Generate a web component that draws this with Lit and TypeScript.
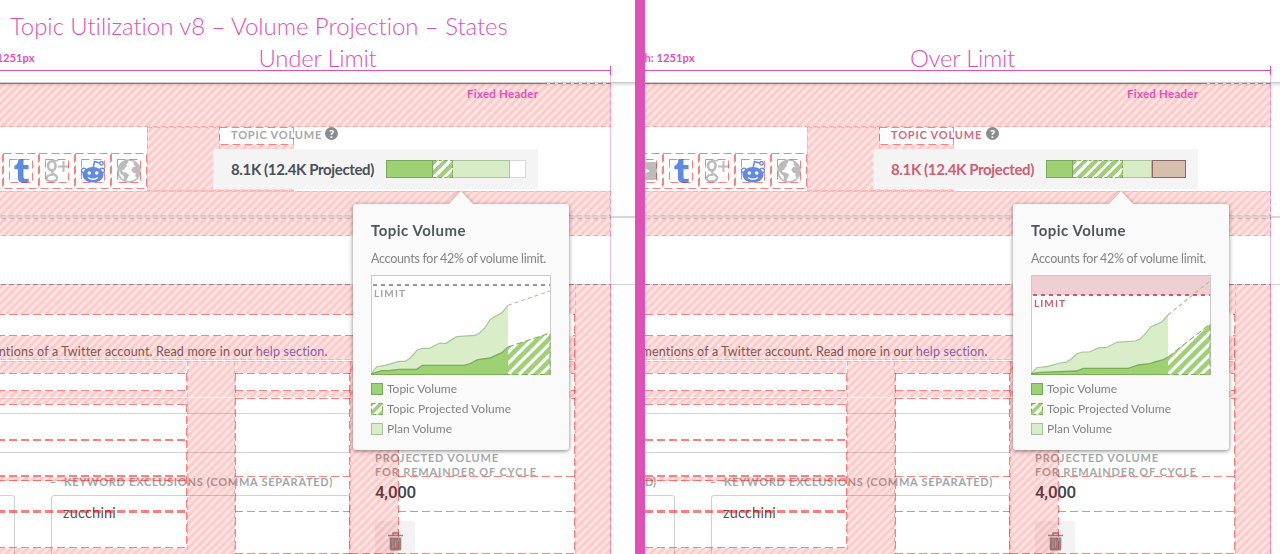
import { LitElement, html, svg, css } from "lit";
import { customElement, property } from "lit/decorators.js";

type State = "under" | "over";

/** One line of text tracked so that it fills a given width. */
@customElement("fit-text")
class FitText extends LitElement {
  @property({ type: Number }) w = 0;
  @property() text = "";
  static styles = css`
    :host { display: block; white-space: pre; }
    span { display: inline-block; }
  `;
  render() {
    return html`<span>${this.text}</span>`;
  }
  updated() {
    const s = this.renderRoot.querySelector("span") as HTMLElement;
    s.style.letterSpacing = "0px";
    const natural = s.getBoundingClientRect().width;
    s.style.letterSpacing = `${((this.w - natural) / this.text.length).toFixed(3)}px`;
  }
}

const ft = (text: string, w: number, cls = "") =>
  html`<fit-text class=${cls} .w=${w} .text=${text}></fit-text>`;

const youtube = html`<svg width="24" height="24" viewBox="0 0 24 24"><rect y="3" width="24" height="18" rx="3" fill="#bcbcbc"/><path d="M9 8l8 4-8 4z" fill="#fff"/></svg>`;
const tumblr = html`<svg width="24" height="24" viewBox="0 0 24 24"><path d="M9.500 0h5v6h5v4.300h-5v7.200c0 2 .8 2.600 2.300 2.600 1 0 2-.2 2.900-.6v3.400c-1.300.8-3 1.100-5 1.100-4 0-5.800-2-5.800-5.500V10.300H5.400V6.800C7.900 6 9.300 3.600 9.500 0z" fill="#6089e2"/></svg>`;
const gplus = html`<svg width="24" height="24" viewBox="0 0 24 24" fill="none" stroke="#bcbcbc"><ellipse cx="6.800" cy="6.800" rx="3.800" ry="4.600" stroke-width="2.600"/><path d="M8 1.600h5.500" stroke-width="1.600"/><path d="M8.500 11.500c-2.500 1.600-1.600 2.600.3 3.700 2.500 1.400 3.800 2.500 3.300 4.300-.8 2.700-4.400 3.100-6.800 2.800-3-.4-4.200-2.200-3.300-4.200.8-1.700 3.300-2.400 6-2.500" stroke-width="2.200"/><path d="M18.500 2v11M13 7.500h11" stroke-width="2"/></svg>`;
const reddit = html`<svg width="24" height="24" viewBox="0 0 24 24"><path d="M12 9.500l1.500-7 6 1.800" fill="none" stroke="#6089e2" stroke-width="1.500"/><circle cx="20.500" cy="4.300" r="1.800" fill="#fff" stroke="#6089e2" stroke-width="1.300"/><circle cx="2.800" cy="11.500" r="2.300" fill="#fff" stroke="#6089e2" stroke-width="1.300"/><circle cx="21.200" cy="11.500" r="2.300" fill="#fff" stroke="#6089e2" stroke-width="1.300"/><ellipse cx="12" cy="15.800" rx="10.500" ry="7.700" fill="#6089e2"/><circle cx="8.300" cy="14" r="1.800" fill="#fff"/><circle cx="15.700" cy="14" r="1.800" fill="#fff"/><path d="M7 18.500q5 3.600 10 0" fill="none" stroke="#fff" stroke-width="1.400"/></svg>`;
const globe = html`<svg width="24" height="24" viewBox="0 0 24 24"><circle cx="12" cy="12" r="11" fill="#fff" stroke="#bcbcbc" stroke-width="1.600"/><path d="M3 5.500L7 2.200l4-.9.5 1.900-2.300 2.200 1 1.500-2.200 1.800-.8 2.400-2-.3.300 2.200 3.200.4 3.600 2.400-1.600 3-2 3.900-1.600-1.600-.5-4-2.700-2.300-2.500-4L1.300 9z" fill="#bcbcbc"/><path d="M17 2.500l3.200 2.500 2.800 6-.6 4-2.600 3.700-1.500-1.500.3-3.200-2.600-.3-1.700-3 1.700-2.700 2.700-.5-2.300-2z" fill="#bcbcbc"/></svg>`;
const trash = html`<svg width="15" height="19" viewBox="0 0 15 19"><path d="M0 3.500h15M5 3V1h5v2" fill="none" stroke="#8a8a8a" stroke-width="1.500"/><path d="M1.700 5.500h11.600V17a1.500 1.500 0 0 1-1.500 1.500H3.200A1.500 1.500 0 0 1 1.700 17z" fill="#8a8a8a"/><path d="M5 7.500v8.500M7.500 7.500v8.500M10 7.500v8.500" stroke="#aaa"/></svg>`;

/** Spacing overlay: hatched gutters and dashed guides. */
@customElement("redline-overlay")
class RedlineOverlay extends LitElement {
  static styles = css`
    :host { display: block; }
    svg { display: block; }
    .g { stroke: #ff0000; stroke-opacity: 0.5; stroke-dasharray: 8 4; fill: none; }
    .s { stroke: #ff0000; stroke-opacity: 0.2; stroke-dasharray: 5 3; fill: none; }
    .k { stroke: #8a1c2c; stroke-opacity: 0.5; stroke-dasharray: 5 3; fill: none; }
    .m { stroke: #de52b8; fill: none; }
    .n { font: 700 11.5px Lato, "Open Sans", sans-serif; fill: #de52b8; }
    .wh { fill: #fff; }
  `;
  h(y: number, a: number, b: number, c = "g") {
    return svg`<path class=${c} d="M${a} ${y + 0.5}H${b}"/>`;
  }
  v(x: number, a: number, b: number, c = "g") {
    return svg`<path class=${c} d="M${x + 0.5} ${a}V${b}"/>`;
  }
  hatch(x: number, y: number, w: number, h: number) {
    return svg`<rect x=${x} y=${y} width=${w} height=${h} fill="url(#hatch)"/>`;
  }
  render() {
    const L = -15;
    return html`<svg width="650" height="554" viewBox="-15 0 650 554">
      <defs>
        <pattern id="hatch" width="8" height="8" patternUnits="userSpaceOnUse">
          <rect width="8" height="8" fill="#f00" fill-opacity=".105"/>
          <path d="M-2 2l4-4M-2 10L10-2M6 10l4-4" stroke="#f00" stroke-opacity=".115" stroke-width="2.700"/>
        </pattern>
      </defs>
      ${this.hatch(L, 84, 625, 43)}${this.h(126, L, 611, "s")}
      ${this.hatch(147, 127, 72, 64)}${this.h(127, 147, 219, "s")}${this.h(190, 147, 219, "s")}
      ${this.v(147, 127, 191, "s")}${this.v(219, 127, 191, "s")}
      ${this.hatch(219, 145, 75, 46)}${this.h(190, 219, 294, "s")}
      <path class="g" d="M219.500 127.500H293.500V144.500H219.500z"/>
      ${[-33, 3, 39, 75, 111].map((x) => svg`
        <path class="g" d="M${x + 0.5} 153.500H${x + 35.5}V188.500H${x + 0.5}z"/>
        <path class="g" d="M${x + 6.5} 159.500H${x + 29.5}V182.500H${x + 6.5}z"/>`)}
      ${this.hatch(L, 191, 625, 25)}${this.h(191, L, 611, "s")}${this.h(215, L, 611, "s")}
      ${this.hatch(L, 218, 625, 18)}${this.h(218, L, 611, "s")}${this.h(235, L, 611, "s")}
      ${this.hatch(L, 285, 590, 29)}${this.h(284, L, 611, "k")}${this.h(314, L, 575)}
      ${this.h(335, L, 575)}${this.hatch(L, 336, 590, 24)}${this.h(359, L, 575, "s")}
      ${this.hatch(L, 361, 201, 12)}${this.hatch(236, 361, 339, 12)}${this.h(361, L, 575, "s")}
      ${this.h(373, L, 187)}${this.h(373, 235, 575)}
      ${this.h(390, L, 187)}${this.h(390, 235, 575)}
      ${this.hatch(L, 391, 202, 6)}${this.hatch(235, 391, 340, 6)}
      ${this.hatch(L, 398, 202, 6)}${this.h(398, L, 187, "s")}${this.h(404, L, 187)}${this.h(398, 235, 575)}
      ${this.h(439, L, 187)}${this.h(440, L, 187)}
      ${this.h(475, L, 187)}${this.h(476, L, 187)}${this.hatch(L, 477, 202, 4)}${this.h(480, L, 187)}
      ${this.h(510, L, 187)}${this.h(511, L, 187)}${this.h(512, L, 187)}
      ${this.h(547, L, 187)}${this.hatch(L, 548, 202, 6)}
      ${this.h(476, 235, 350)}${this.h(511, 235, 350)}${this.h(553, 235, 350)}
      ${this.h(476, 398, 575)}${this.h(511, 398, 575)}${this.h(553, 350, 575)}
      ${this.hatch(187, 361, 48, 193)}${this.hatch(350, 361, 48, 193)}
      ${this.v(186, 373, 390)}${this.v(186, 404, 548)}${this.v(187, 361, 554, "s")}
      ${this.v(235, 373, 554)}${this.v(234, 361, 554, "s")}
      ${this.v(349, 373, 554)}${this.v(350, 361, 554, "s")}${this.v(398, 373, 554)}
      ${this.hatch(575, 285, 36, 269)}${this.v(574, 314, 554)}${this.v(575, 284, 554, "s")}
      <rect class="wh" x="-15" y="397" width="590" height="1" fill-opacity=".8"/>
      <path class="m" d="M-15 70.500H610.500M610.500 66V75"/>
      <path class="m" d="M610.500 75V554" stroke-opacity=".38"/>
      <path d="M-15 83.500H542" stroke="#b05a90"/>
      <path d="M542 83.500H611" stroke="#a8707a" stroke-dasharray="5 3"/>
      <path class="s" d="M610.500 84V127M610.500 191V236M610.500 285V554"/>
      <text class="n" x="-15.500" y="61.500" font-size="11" textLength="50" lengthAdjust="spacingAndGlyphs">h: 1251px</text>
      <text class="n" x="467" y="98" textLength="71">Fixed Header</text>
    </svg>`;
  }
}

const planUnder = "0 99,5.700 91.700,14 90.300,28.300 86.300,34.300 86.300,39.700 82.700,46.300 75,51.700 73.300,58.300 73.300,68.300 68.300,75 68.300,85.700 61.700,104 60.300,108.300 58.300,114 52.700,119.700 44,130.700 38,137 30.300";
const topicUnder = "0 99,10.700 95.700,19 95.300,28.300 94.300,45.700 94.300,51.300 90.300,93 90.300,98.300 89,106.700 84.700,119 83,126.300 79.700,131 77.700,137 72";
const planOver = "0 99,5.700 92.700,17.300 91.300,29 88,35 87.300,40.300 84,46 78.700,51.700 77,58.300 77,68.300 72.700,75 72.700,85.700 67.300,104 66,109 64,114.700 58.300,120 51.700,130.700 47,137 40";
const topicOver = "0 99,9 97.300,45.700 96,52.300 93.300,97.300 93.300,107.300 90,119 88.700,125.700 86.300,131.700 85,137 82";

@customElement("volume-popover")
class VolumePopover extends LitElement {
  @property() state: State = "under";
  static styles = css`
    :host { display: block; box-sizing: border-box; width: 216px; height: 246px; padding: 15px 18px 0; background: #fafafa; border-radius: 3px; filter: drop-shadow(0 1px 2px rgba(0,0,0,.5)); font: 12px/20px Lato, "Open Sans", sans-serif; color: #7f8183; }
    .tip { position: absolute; left: 95px; top: -13px; width: 26px; height: 14px; background: #fafafa; clip-path: polygon(50% 0, 100% 100%, 0 100%); }
    .title { font-size: 15px; line-height: 23px; font-weight: 700; color: #51555c; }
    .sub { font-size: 12.5px; line-height: 20px; margin: 7px 0 6px; color: #858585; }
    svg { display: block; }
    .item { display: flex; align-items: center; gap: 4px; height: 20px; }
    .legend { padding-top: 4px; }
    .lim { font: 700 10px Lato, "Open Sans", sans-serif; }
  `;
  render() {
    const over = this.state === "over";
    const plan = over ? planOver : planUnder;
    const topic = over ? topicOver : topicUnder;
    const limY = over ? 20 : 10;
    const limC = over ? "#cc5c70" : "#999";
    const pE = over ? "179 6" : "179 16";
    const tE = over ? "179 49" : "179 58";
    const t0 = over ? "137 82" : "137 72";
    const p0 = over ? "137 40" : "137 30.300";
    return html`<div class="tip"></div>
      ${ft("Topic Volume", 95, "title")}
      ${ft("Accounts for 42% of volume limit.", 175, "sub")}
      <svg width="180" height="100" viewBox="0 0 180 100">
        <defs><pattern id="ph" width="11" height="11" patternUnits="userSpaceOnUse"><rect width="11" height="11" fill="#fff"/><path d="M-3 3l6-6M-3 14L14-3M8 14l6-6" stroke="#9ed174" stroke-width="4.500"/></pattern></defs>
        <rect width="180" height="100" fill="#fff"/>
        ${over ? svg`<rect width="180" height="20" fill="#f0cfd4"/>` : ""}
        <rect x=".5" y=".5" width="179" height="99" fill="none" stroke="#cacaca"/>
        <polygon points="${plan} 137 99,0 99" fill="#d9edc9"/>
        <polyline points=${plan} fill="none" stroke="#a9c59a" stroke-width="1.200"/>
        <polygon points="${topic} 137 99,0 99" fill="#9ed174"/>
        <polyline points=${topic} fill="none" stroke="#7bad58" stroke-width="1.300"/>
        <path d="M0 99.500H137" stroke="#7bad58"/>
        <path d="M${t0}L${tE}V100H137z" fill="url(#ph)"/>
        <path d="M${t0}L${tE}V99.500H137" fill="none" stroke="#7bad58" stroke-dasharray="6 3"/>
        <path d="M${p0}L${pE}" stroke="#b8b8a0" stroke-width="1.200" stroke-dasharray="4 3"/>
        <path d="M2 ${limY}H179" stroke=${limC} stroke-width="2" stroke-dasharray="4 4"/>
        <text class="lim" x="3" y=${limY + 12} fill=${over ? limC : "#a3a3a3"} textLength="31">LIMIT</text>
      </svg>
      <div class="legend">
        <div class="item"><svg width="12" height="12"><rect x=".5" y=".5" width="11" height="11" fill="#9ed174" stroke="#78a85a"/></svg>${ft("Topic Volume", 70)}</div>
        <div class="item"><svg width="12" height="12"><rect width="12" height="12" fill="#fff"/><path d="M0 12V8L8 0h4v1L1 12zM6 12l6-6v5l-1 1zM0 0h4L0 4z" fill="#9ed174"/><rect x=".5" y=".5" width="11" height="11" fill="none" stroke="#78a85a" stroke-dasharray="4 3"/></svg>${ft("Topic Projected Volume", 124)}</div>
        <div class="item"><svg width="12" height="12"><rect x=".5" y=".5" width="11" height="11" fill="#d9edc9" stroke="#a8c39a"/></svg>${ft("Plan Volume", 65)}</div>
      </div>`;
  }
}

@customElement("volume-bar")
class VolumeBar extends LitElement {
  @property() state: State = "under";
  static styles = css`
    :host { display: flex; width: 140px; height: 18px; }
    i { display: block; box-sizing: border-box; height: 18px; border: 1px solid; }
    .topic { background: #9ed174; border-color: #78a85a; }
    .proj { border: 1px dashed #78a85a; border-left: 0; background: repeating-linear-gradient(135deg, #9ed174 0 4px, #fff 4px 7.200px) border-box; }
    .plan { background: #d8ecc8; border-color: #a8c39a; border-left: 0; }
    .rest { background: #fff; border-color: #d8d8d8; border-left: 0; }
    .excess { background: #d6bfad; border-color: #8d6763; }
  `;
  render() {
    const parts: [string, number][] = this.state === "over"
      ? [["topic", 27], ["proj", 50], ["plan", 29], ["excess", 34]]
      : [["topic", 47], ["proj", 20], ["plan", 57], ["rest", 16]];
    return html`${parts.map(([c, w]) => html`<i class=${c} style="width:${w}px"></i>`)}`;
  }
}

@customElement("art-board")
class ArtBoard extends LitElement {
  @property() state: State = "under";
  static styles = css`
    :host { display: grid; grid-template: 554px / 635px; width: 635px; height: 554px; overflow: hidden; background: #fff; font-family: Lato, "Open Sans", sans-serif; }
    .names, .page, redline-overlay, .widget { grid-area: 1 / 1; }
    .names { padding-top: 10px; font-size: 24px; font-weight: 300; line-height: 32px; color: #de52b8; z-index: 2; }
    .name { height: 32px; padding-left: 10px; }
    .state { width: max-content; margin: 0 auto; }
    .page, redline-overlay, .widget { width: 650px; height: 554px; }
    .page { display: grid; grid-template-rows: 82px 45px 64px 25px 68px 52px 25px 193px; }
    .shade { grid-row: 2; height: 5px; background: linear-gradient(#c4c4c4, #e6e6e6 40%, #fff); }
    .top { grid-row: 3; display: flex; align-items: flex-start; }
    .icons { display: flex; margin: 26px 0 0 -18px; width: 264px; flex: none; }
    .icons span { width: 36px; height: 36px; display: grid; place-items: center; }
    .head { display: flex; gap: 3px; font-size: 11px; line-height: 16px; font-weight: 700; color: #a6a6a6; }
    .over .head { color: #d26a7d; gap: 4px; }
    .q { width: 13px; height: 13px; border-radius: 50%; background: #8c8c8c; color: #fff; font: 900 11px/13px Lato, sans-serif; text-align: center; }
    .rule { grid-row: 5; height: 2px; background: #d6d6d6; }
    .body { grid-row: 6; border-top: 1px solid #d4d4d4; }
    .help { grid-row: 7; display: flex; justify-content: flex-end; width: 342.500px; font-size: 12.500px; line-height: 20px; margin-top: 6px; color: #666; white-space: pre; }
    .help a { color: #6872cc; }
    .form { grid-row: 8; display: grid; grid-template-columns: 365px 1fr; }
    .left { display: grid; grid-template-rows: 53px 39px 20px 1fr; }
    .left hr { margin: 0; border: 0; border-top: 1px solid #d4d4d4; align-self: start; }
    .left hr:first-child { align-self: end; }
    .left hr:nth-child(2) { margin-top: 38px; }
    .legends { display: flex; justify-content: space-between; width: 348px; font-size: 11px; line-height: 16px; font-weight: 700; color: #a0a5a5; margin-top: 21px; }
    .fields { display: grid; grid-template-columns: 30px 299px; gap: 36px; margin-top: 22px; height: 80px; }
    .f { border: 1px solid #d0d0d0; border-radius: 3px; font-size: 14.500px; color: #555; line-height: 20px; padding: 7px 11px; }
    .f:first-child { border-left: 0; border-radius: 0 3px 3px 0; padding: 0; }
    .right { padding: 90px 0 0 25px; font-size: 11px; line-height: 14px; font-weight: 700; color: #a6a8a8; }
    .count { font: 500 17px/24px Roboto, sans-serif; color: #40454c; margin-top: 1px; }
    .del { margin-top: 17px; width: 40px; height: 40px; border-radius: 3px; background: #f3f3f3; display: flex; justify-content: center; padding-top: 11px; box-sizing: border-box; }
    .widget { position: relative; z-index: 3; display: flow-root; }
    .panel { box-sizing: border-box; width: 325px; height: 40px; margin: 149px 0 0 228px; padding: 0 12px 0 18px; background: #f4f4f4; display: flex; align-items: center; justify-content: space-between; font-size: 15px; font-weight: 700; line-height: 40px; color: #4b5057; }
    .over .panel { color: #cf5f73; }
    .pop { position: absolute; left: 368px; top: 204px; }
    .widget.under, .page.under, redline-overlay.under { margin-left: -15px; }
    .widget.over, .page.over, redline-overlay.over { margin-left: 0; }
  `;
  render() {
    const s = this.state;
    const over = s === "over";
    return html`
      <div class="page ${s}">
        <div class="shade"></div>
        <div class="top">
          <div class="icons">${[youtube, tumblr, gplus, reddit, globe].map((i) => html`<span>${i}</span>`)}</div>
          <div class="head">${ft("TOPIC VOLUME", 91)}<div class="q">?</div></div>
        </div>
        <div></div>
        <div class="rule"></div>
        <div class="body"></div>
        <div class="help">${ft("mentions of a Twitter account. Read more in our ", 274)}<a>${ft("help section", 69)}</a>.</div>
        <div class="form">
          <div class="left">
            <hr /><hr />
            <div class="legends">${ft("D)", 11)}${ft("–  KEYWORD EXCLUSIONS (COMMA SEPARATED)", 283)}</div>
            <div class="fields"><div class="f"></div><div class="f">${ft("zucchini", 53)}</div></div>
          </div>
          <div class="right">
            ${ft("PROJECTED VOLUME", 124)}${ft("FOR REMAINDER OF CYCLE", 162)}
            ${ft("4,000", 41, "count")}
            <div class="del">${trash}</div>
          </div>
        </div>
      </div>
      <redline-overlay class=${s}></redline-overlay>
      <div class="names">
        <div class="name">${over ? "" : ft("Topic Utilization v8 – Volume Projection – States", 499)}</div>
        ${over ? ft("Over Limit", 105, "state") : ft("Under Limit", 118, "state")}
      </div>
      <div class="widget ${s}">
        <div class="panel">${ft("8.1K (12.4K Projected)", 143)}<volume-bar .state=${s}></volume-bar></div>
        <volume-popover class="pop" .state=${s}></volume-popover>
      </div>`;
  }
}

@customElement("app-root")
class AppRoot extends LitElement {
  static styles = css`
    :host { display: grid; grid-template-columns: 635px 635px; gap: 10px; width: 1280px; height: 554px; overflow: hidden; background: #de52b8; }
  `;
  render() {
    return html`<art-board .state=${"under"}></art-board><art-board .state=${"over"}></art-board>`;
  }
}
